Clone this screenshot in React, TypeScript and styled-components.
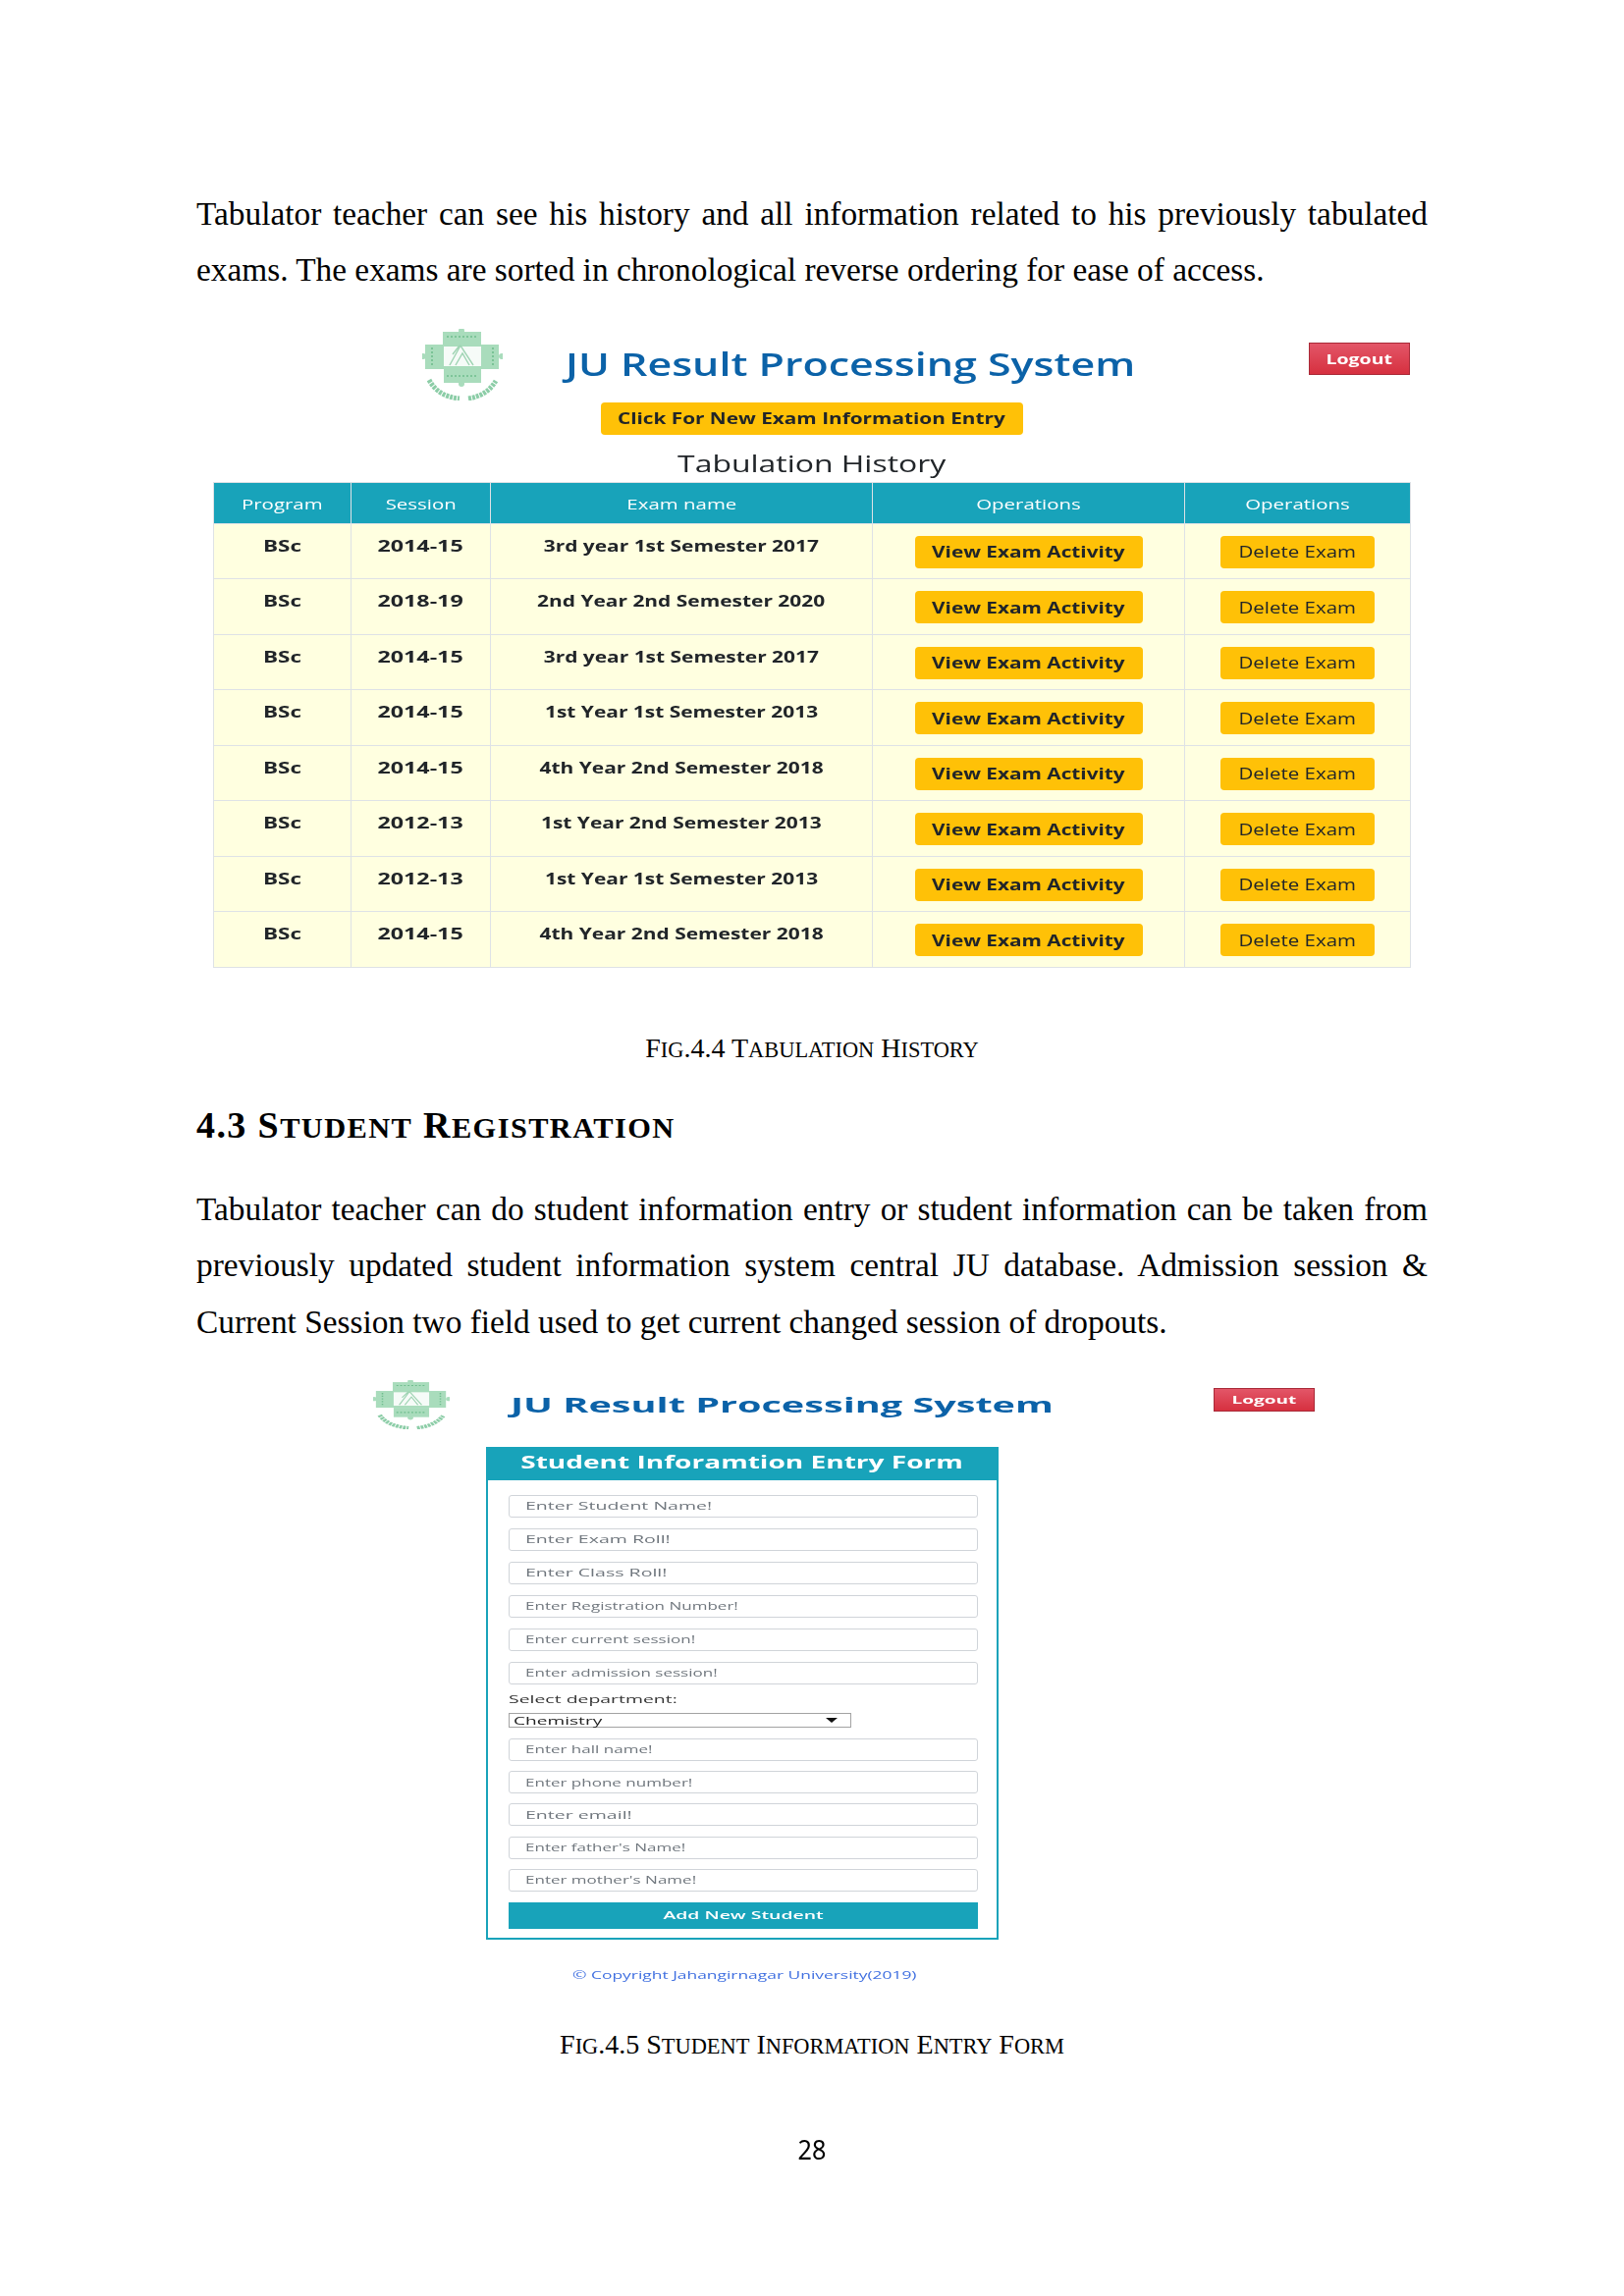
import styled, { createGlobalStyle } from 'styled-components';

const GlobalStyle = createGlobalStyle`
  html, body { margin: 0; padding: 0; background: #fff; }
`;

const UI = `"Open Sans", "Noto Sans", sans-serif`;
const TEAL = '#18a3ba';
const AMBER = '#ffc107';

const Page = styled.div`
  width: 1654px;
  height: 2339px;
  box-sizing: border-box;
  padding: 188.5px 200px 0 200px;
  font-family: "Liberation Serif", serif;
  color: #000;
  overflow: hidden;
`;

const Paragraph = styled.p`
  margin: 0;
  font-size: 33.35px;
  line-height: 57.8px;
  text-align: justify;
`;

const Caption = styled.div<{ $top: number; $after: number }>`
  margin: ${(p) => p.$top}px 0 ${(p) => p.$after}px 0;
  font-size: 28px;
  line-height: 40px;
  text-align: center;
`;

const Heading = styled.h2`
  margin: 0 0 29px 0;
  font-size: 38px;
  line-height: 50px;
  font-weight: bold;
  letter-spacing: 1.4px;
`;

const LowerRun = styled.span`
  font-size: 0.8em;
  text-transform: uppercase;
`;

// the font has no real small capitals, the document's are bigger than the synthetic ones
const SmallCaps = ({ text }: { text: string }) => (
  <>
    {text.split(/([a-z]+)/).map((part, i) =>
      i % 2 ? <LowerRun key={i}>{part}</LowerRun> : part
    )}
  </>
);

// the screenshots in the document are stretched sideways, text follows that
const Wide = styled.span<{ $x: number; $left?: boolean }>`
  display: inline-block;
  white-space: nowrap;
  transform: scaleX(${(p) => p.$x});
  transform-origin: ${(p) => (p.$left ? 'left center' : 'center')};
`;

const HistoryShot = styled.div`
  margin: 30.5px 18px 0 17px;
  font-family: ${UI};
  filter: blur(0.35px);
`;

const HistoryTop = styled.div`
  display: flex;
  align-items: flex-start;
  height: 75px;
  padding-left: 213px;
`;

const HistoryLogo = styled.svg`
  width: 82px;
  height: 73px;
  flex: none;
  margin-right: 64px;
`;

const HistoryTitle = styled.div`
  flex: 1;
  padding-top: 13px;
  font-size: 32px;
  line-height: 46px;
  font-weight: 600;
  color: #0b62a8;
`;

const LogoutButton = styled.div<{ $small?: boolean }>`
  flex: none;
  width: 103px;
  height: ${(p) => (p.$small ? 24 : 33)}px;
  box-sizing: border-box;
  margin-top: ${(p) => (p.$small ? 8 : 14)}px;
  display: flex;
  align-items: center;
  justify-content: center;
  background: linear-gradient(#e35668, #d6303f);
  border: 1px solid #a92a38;
  color: #fff;
  font-size: ${(p) => (p.$small ? 10 : 14)}px;
  font-weight: 700;
`;

const CenterRow = styled.div`
  display: flex;
  justify-content: center;
`;

const AmberButton = styled.div<{ $w: number; $bold?: boolean }>`
  width: ${(p) => p.$w}px;
  height: 33px;
  display: inline-flex;
  align-items: center;
  justify-content: center;
  background: ${AMBER};
  border-radius: 4px;
  color: #212529;
  font-size: 15.5px;
  font-weight: ${(p) => (p.$bold ? 700 : 400)};
`;

const TableTitle = styled.div`
  margin: 12.5px 0 2.5px 0;
  text-align: center;
  font-size: 24px;
  line-height: 33px;
  color: #212529;
`;

const HistoryTable = styled.table`
  width: 1219px;
  border-collapse: collapse;
  table-layout: fixed;
`;

const HeadCell = styled.th`
  height: 39px;
  padding: 2px 0 0 0;
  background: ${TEAL};
  border: 1px solid #dee2e6;
  color: #fff;
  font-size: 14px;
  font-weight: 400;
  text-align: center;
`;

const DataCell = styled.td`
  height: 56.5px;
  box-sizing: border-box;
  padding: 0;
  background: #ffffe0;
  border: 1px solid #dee2e6;
  text-align: center;
  vertical-align: top;
  color: #212529;
  font-size: 15.5px;
  line-height: 20px;
  font-weight: 700;
`;

const CellText = styled.div`
  padding-top: 12px;
`;

const CellButton = styled.div`
  padding-top: 12px;
`;

const StudentShot = styled.div`
  margin: 30px 0 0 0;
  font-family: ${UI};
  filter: blur(0.55px);
`;

const StudentTop = styled.div`
  display: flex;
  align-items: flex-start;
  height: 68px;
  padding-left: 180px;
`;

const StudentLogo = styled.svg`
  width: 78px;
  height: 50px;
  flex: none;
  margin-right: 62px;
`;

const StudentTitle = styled.div`
  width: 716px;
  flex: none;
  padding-top: 8px;
  font-size: 22px;
  line-height: 32px;
  font-weight: 700;
  color: #0b62a8;
`;

const FormCard = styled.div`
  width: 522px;
  box-sizing: border-box;
  margin-left: 295px;
  border: 2px solid ${TEAL};
  border-top: none;
`;

const FormHead = styled.div`
  height: 34px;
  margin: 0 -1px;
  background: ${TEAL};
  color: #fff;
  font-size: 17px;
  line-height: 32px;
  font-weight: 700;
  text-align: center;
`;

const FormBody = styled.div`
  display: flex;
  flex-direction: column;
  gap: 11px;
  padding: 15px 19px 9px 21px;
`;

const FieldGroup = styled.div<{ $gap: number }>`
  display: flex;
  flex-direction: column;
  gap: ${(p) => p.$gap}px;
`;

const InputBox = styled.div`
  height: 23px;
  box-sizing: border-box;
  padding-left: 16px;
  display: flex;
  align-items: center;
  border: 1.5px solid #d0d4d9;
  border-radius: 3px;
  color: #6f767d;
  font-size: 10.5px;
`;

const SelectGroup = styled.div`
  margin-top: -2.5px;
  margin-bottom: -0.5px;
`;

const SelectLabel = styled.div`
  font-size: 10.5px;
  line-height: 14px;
  color: #333;
`;

const SelectBox = styled.div`
  width: 349px;
  height: 15px;
  box-sizing: border-box;
  margin-top: 7px;
  padding: 0 13px 0 4px;
  display: flex;
  align-items: center;
  justify-content: space-between;
  border: 1.5px solid #a3a3a3;
  color: #222;
  font-size: 10.5px;
`;

const SelectArrow = styled.span`
  width: 0;
  height: 0;
  border-left: 6px solid transparent;
  border-right: 6px solid transparent;
  border-top: 5px solid #111;
`;

const AddButton = styled.div`
  height: 27px;
  display: flex;
  align-items: center;
  justify-content: center;
  background: ${TEAL};
  color: #fff;
  font-size: 10px;
  font-weight: 600;
`;

const Copyright = styled.div`
  margin: 28px 0 0 383px;
  font-size: 10px;
  line-height: 16px;
  color: #3f6fe0;
`;

const PageNumber = styled.div`
  margin-top: 64.5px;
  text-align: center;
  font-family: "Noto Sans", "Open Sans", sans-serif;
  font-size: 28px;
  line-height: 38px;
  color: #000;
`;

const JuEmblem = () => (
  <>
    <g fill="#a9dcbc">
      <rect x="51" y="17" width="39" height="15" />
      <rect x="33" y="30" width="75" height="25" />
      <rect x="52" y="55" width="38" height="14" />
      <circle cx="70" cy="16" r="3" />
      <circle cx="70" cy="70" r="3" />
      <circle cx="31" cy="42" r="3" />
      <circle cx="111" cy="42" r="3" />
    </g>
    <rect x="52" y="32" width="38" height="20" fill="#f6fbf8" />
    <path d="M58 51 L69 31 L82 51 M64 51 L71 39 L78 51 M61 40 L68 31" fill="none" stroke="#9fd4b3" strokeWidth="1.4" />
    <g fill="none" stroke="#6fbd8d" strokeWidth="1.6" strokeDasharray="2 2">
      <path d="M55 22 H87" />
      <path d="M55 62 H87" />
      <path d="M40 33 V52" />
      <path d="M102 33 V52" />
    </g>
    <path d="M37 66 Q46 83 68 85" fill="none" stroke="#8ccda7" strokeWidth="5" strokeDasharray="3 1" />
    <path d="M77 85 Q96 82 105 67" fill="none" stroke="#8ccda7" strokeWidth="5" strokeDasharray="3 1" />
  </>
);

const rows = [
  ['BSc', '2014-15', '3rd year 1st Semester 2017'],
  ['BSc', '2018-19', '2nd Year 2nd Semester 2020'],
  ['BSc', '2014-15', '3rd year 1st Semester 2017'],
  ['BSc', '2014-15', '1st Year 1st Semester 2013'],
  ['BSc', '2014-15', '4th Year 2nd Semester 2018'],
  ['BSc', '2012-13', '1st Year 2nd Semester 2013'],
  ['BSc', '2012-13', '1st Year 1st Semester 2013'],
  ['BSc', '2014-15', '4th Year 2nd Semester 2018'],
];

const columns = [140, 142, 389, 318, 230];
const cellStretch = [1.45, 1.5, 1.35];
const headers = ['Program', 'Session', 'Exam name', 'Operations', 'Operations'];

const upperFields = [
  { text: 'Enter Student Name!', x: 1.86 },
  { text: 'Enter Exam Roll!', x: 1.86 },
  { text: 'Enter Class Roll!', x: 1.86 },
  { text: 'Enter Registration Number!', x: 1.62 },
  { text: 'Enter current session!', x: 1.62 },
  { text: 'Enter admission session!', x: 1.62 },
];

const lowerFields = [
  { text: 'Enter hall name!', x: 1.62 },
  { text: 'Enter phone number!', x: 1.62 },
  { text: 'Enter email!', x: 1.86 },
  { text: "Enter father's Name!", x: 1.62 },
  { text: "Enter mother's Name!", x: 1.62 },
];

const App = () => {
  return (
    <Page>
      <GlobalStyle />
      <Paragraph>
        Tabulator teacher can see his history and all information related to his previously tabulated
        exams. The exams are sorted in chronological reverse ordering for ease of access.
      </Paragraph>

      <HistoryShot>
        <HistoryTop>
          <HistoryLogo viewBox="30 14 82 73">
            <JuEmblem />
          </HistoryLogo>
          <HistoryTitle>
            <Wide $x={1.343} $left>JU Result Processing System</Wide>
          </HistoryTitle>
          <LogoutButton>
            <Wide $x={1.39}>Logout</Wide>
          </LogoutButton>
        </HistoryTop>
        <CenterRow>
          <AmberButton $w={430} $bold>
            <Wide $x={1.34}>Click For New Exam Information Entry</Wide>
          </AmberButton>
        </CenterRow>
        <TableTitle>
          <Wide $x={1.33}>Tabulation History</Wide>
        </TableTitle>
        <HistoryTable>
          <colgroup>
            {columns.map((w, i) => (
              <col key={i} style={{ width: w }} />
            ))}
          </colgroup>
          <thead>
            <tr>
              {headers.map((h, i) => (
                <HeadCell key={i}>
                  <Wide $x={1.46}>{h}</Wide>
                </HeadCell>
              ))}
            </tr>
          </thead>
          <tbody>
            {rows.map((row, i) => (
              <tr key={i}>
                {row.map((text, j) => (
                  <DataCell key={j}>
                    <CellText>
                      <Wide $x={cellStretch[j]}>{text}</Wide>
                    </CellText>
                  </DataCell>
                ))}
                <DataCell>
                  <CellButton>
                    <AmberButton $w={232} $bold>
                      <Wide $x={1.34}>View Exam Activity</Wide>
                    </AmberButton>
                  </CellButton>
                </DataCell>
                <DataCell>
                  <CellButton>
                    <AmberButton $w={157}>
                      <Wide $x={1.32}>Delete Exam</Wide>
                    </AmberButton>
                  </CellButton>
                </DataCell>
              </tr>
            ))}
          </tbody>
        </HistoryTable>
      </HistoryShot>

      <Caption $top={62.5} $after={30.5}>
        <SmallCaps text="Fig.4.4 Tabulation History" />
      </Caption>
      <Heading>
        <SmallCaps text="4.3 Student Registration" />
      </Heading>
      <Paragraph>
        Tabulator teacher can do student information entry or student information can be taken from
        previously updated student information system central JU database. Admission session &amp;
        Current Session two field used to get current changed session of dropouts.
      </Paragraph>

      <StudentShot>
        <StudentTop>
          <StudentLogo viewBox="30 14 82 73" preserveAspectRatio="none">
            <JuEmblem />
          </StudentLogo>
          <StudentTitle>
            <Wide $x={1.8} $left>JU Result Processing System</Wide>
          </StudentTitle>
          <LogoutButton $small>
            <Wide $x={1.9}>Logout</Wide>
          </LogoutButton>
        </StudentTop>
        <FormCard>
          <FormHead>
            <Wide $x={1.65}>Student Inforamtion Entry Form</Wide>
          </FormHead>
          <FormBody>
            <FieldGroup $gap={11}>
              {upperFields.map((f) => (
                <InputBox key={f.text}>
                  <Wide $x={f.x} $left>{f.text}</Wide>
                </InputBox>
              ))}
            </FieldGroup>
            <SelectGroup>
              <SelectLabel>
                <Wide $x={1.85} $left>Select department:</Wide>
              </SelectLabel>
              <SelectBox>
                <Wide $x={1.82} $left>Chemistry</Wide>
                <SelectArrow />
              </SelectBox>
            </SelectGroup>
            <FieldGroup $gap={10.2}>
              {lowerFields.map((f) => (
                <InputBox key={f.text}>
                  <Wide $x={f.x} $left>{f.text}</Wide>
                </InputBox>
              ))}
            </FieldGroup>
            <AddButton>
              <Wide $x={1.94}>Add New Student</Wide>
            </AddButton>
          </FormBody>
        </FormCard>
        <Copyright>
          <Wide $x={1.74} $left>© Copyright Jahangirnagar University(2019)</Wide>
        </Copyright>
      </StudentShot>

      <Caption $top={43.5} $after={0}>
        <SmallCaps text="Fig.4.5 Student Information Entry Form" />
      </Caption>
      <PageNumber>
        <Wide $x={0.9}>28</Wide>
      </PageNumber>
    </Page>
  );
};

export default App;
